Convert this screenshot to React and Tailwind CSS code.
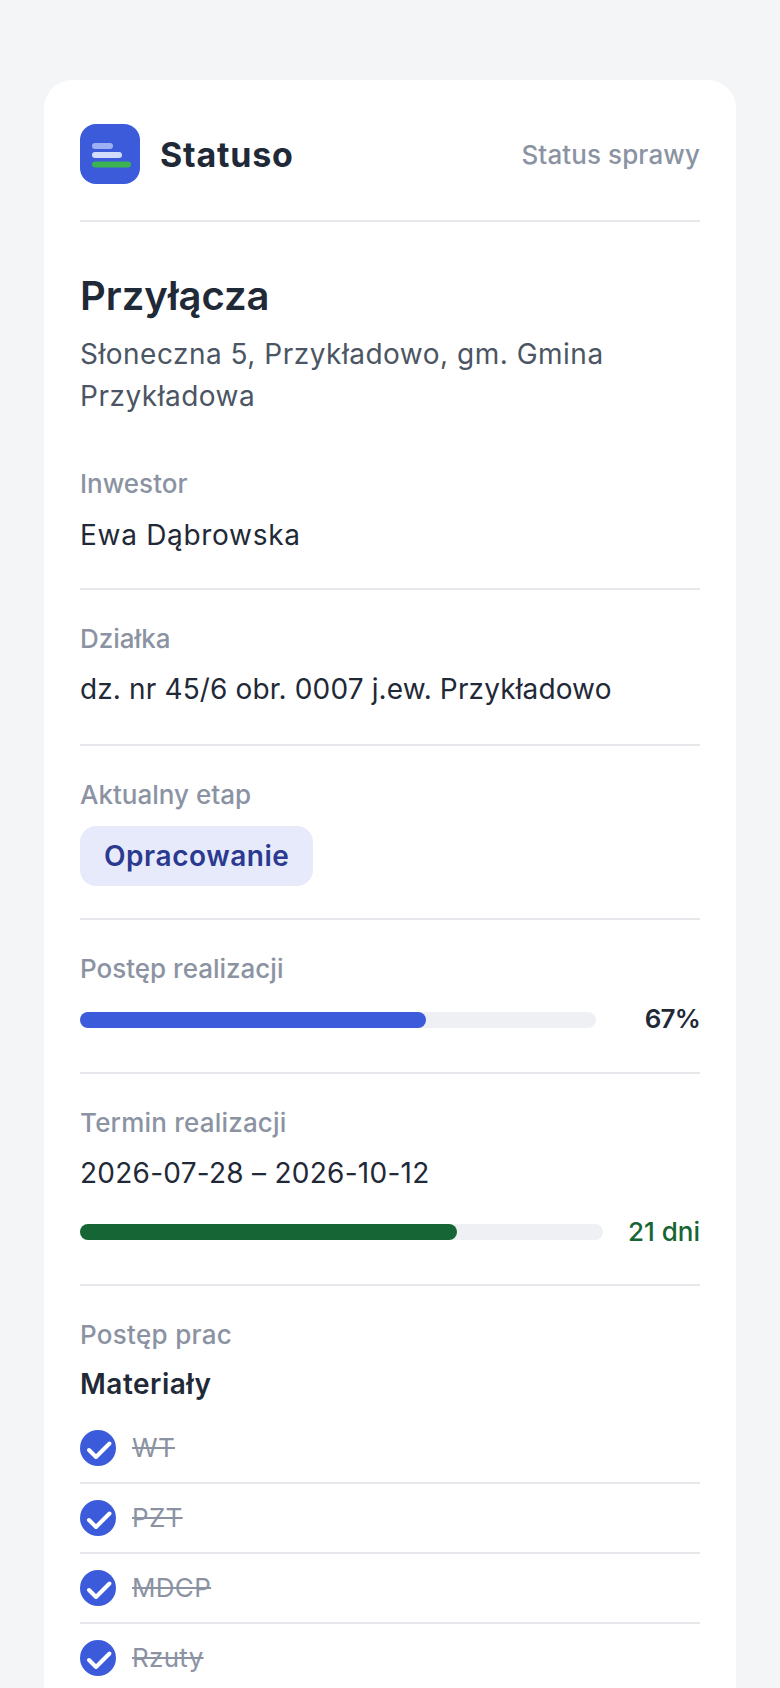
import React from "react";

const Label = ({ children, className = "" }) => (
  <div className={`text-[26px] leading-[39px] font-medium text-[#8b93a3] ${className}`}>{children}</div>
);

const Section = ({ children, className = "pb-[34px]" }) => (
  <section className={`border-b-2 border-[#e5e7eb] pt-[29px] ${className}`}>{children}</section>
);

const Bar = ({ track, fill, color }) => (
  <div className={`h-4 rounded-full bg-[#eef0f3] ${track}`}>
    <div className={`h-4 rounded-full ${fill} ${color}`} />
  </div>
);

const CheckRow = ({ label, last }) => (
  <li className={`flex items-center gap-4 py-4 ${last ? "" : "border-b-2 border-[#e5e7eb]"}`}>
    <svg width="36" height="36" viewBox="0 0 36 36" className="shrink-0">
      <circle cx="18" cy="18" r="18" fill="#3b5bdb" />
      <path d="M9 20l7 7L29.5 13.5" fill="none" stroke="#fff" strokeWidth="4" strokeLinecap="round" strokeLinejoin="round" />
    </svg>
    <span className="text-[26px] leading-[36px] text-[#8b93a3] line-through tracking-[0.3px]">{label}</span>
  </li>
);

export default function App() {
  return (
    <div className="h-screen overflow-hidden bg-[#f4f5f7] px-11 pt-20 font-['Inter',sans-serif] text-[#1f2937]">
      <div className="rounded-[28px] bg-white px-9 pt-11 pb-8">
        <header className="flex items-center justify-between border-b-2 border-[#e5e7eb] pb-9">
          <div className="flex items-center gap-5">
            <svg width="60" height="60" viewBox="0 0 60 60">
              <rect width="60" height="60" rx="16" fill="#3b5bdb" />
              <rect x="12" y="19" width="21" height="6" rx="3" fill="#9fb0f2" />
              <rect x="12" y="28" width="30" height="6" rx="3" fill="#d3dcfb" />
              <rect x="12" y="37.5" width="39" height="6" rx="3" fill="#3db34f" />
            </svg>
            <span className="text-[34px] font-bold leading-[51px] tracking-[0.8px]">Statuso</span>
          </div>
          <span className="text-[26px] leading-[39px] font-medium text-[#8b93a3] tracking-[0.1px]">Status sprawy</span>
        </header>

        <section className="border-b-2 border-[#e5e7eb] pt-11 pb-8">
          <h1 className="text-[40px] font-semibold leading-[60px]">Przyłącza</h1>
          <p className="mt-[7px] text-[28px] leading-[42px] text-[#4b5563] tracking-[0.5px]">Słoneczna 5, Przykładowo, gm. Gmina Przykładowa</p>
          <Label className="mt-[47px]">Inwestor</Label>
          <div className="mt-[11px] text-[28px] leading-[42px] tracking-[0.7px]">Ewa Dąbrowska</div>
        </section>

        <Section>
          <Label>Działka</Label>
          <div className="mt-[10px] text-[28px] leading-[42px] tracking-[0.13px]">dz. nr 45/6 obr. 0007 j.ew. Przykładowo</div>
        </Section>

        <Section className="pb-8">
          <Label>Aktualny etap</Label>
          <span className="mt-3 inline-block rounded-2xl bg-[#e7eafb] px-6 py-[9px] align-top text-[28px] font-semibold leading-[42px] text-[#2b3a90] tracking-[0.55px]">Opracowanie</span>
        </Section>

        <Section className="pb-8">
          <Label>Postęp realizacji</Label>
          <div className="mt-[10px] flex items-center justify-between">
            <div className="mt-[2px]">
              <Bar track="w-[516px]" fill="w-[67%]" color="bg-[#3b5bdb]" />
            </div>
            <span className="text-[26px] font-semibold leading-[42px] tracking-[-0.8px]">67%</span>
          </div>
        </Section>

        <Section className="pb-8">
          <Label className="tracking-[0.2px]">Termin realizacji</Label>
          <div className="mt-[10px] text-[28px] leading-[42px] tracking-[0.26px]">2026-07-28 – 2026-10-12</div>
          <div className="mt-[18px] flex items-center justify-between">
            <Bar track="w-[523px]" fill="w-[72%]" color="bg-[#166534]" />
            <span className="text-[26px] font-medium leading-[40px] text-[#166534]">21 dni</span>
          </div>
        </Section>

        <section className="pt-[29px]">
          <Label className="tracking-[0.3px]">Postęp prac</Label>
          <h2 className="mt-[9px] text-[28px] font-semibold leading-[42px] tracking-[0.5px]">Materiały</h2>
          <ul className="mt-[9px]">
            <CheckRow label="WT" />
            <CheckRow label="PZT" />
            <CheckRow label="MDCP" />
            <CheckRow label="Rzuty" last />
          </ul>
        </section>
      </div>
    </div>
  );
}
